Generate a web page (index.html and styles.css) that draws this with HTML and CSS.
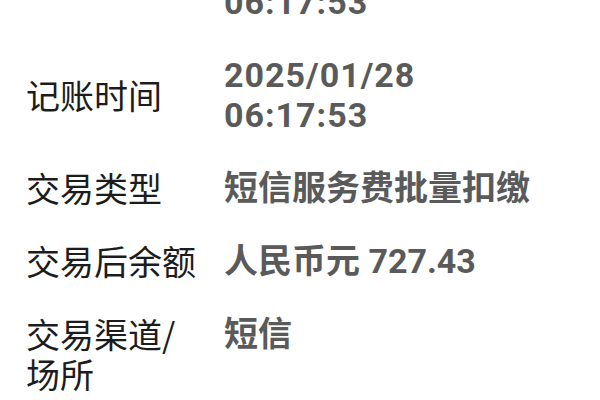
FILE: index.html
```html
<!DOCTYPE html>
<html lang="zh-CN">
<head>
<meta charset="utf-8">
<title>交易详情</title>
<link rel="stylesheet" href="styles.css">
</head>
<body>
<div class="detail-list">
  <div class="row">
    <div class="label">交易时间</div>
    <div class="value value-time">2025/01/28<br>06:17:53</div>
  </div>
  <div class="row">
    <div class="label">记账时间</div>
    <div class="value value-time">2025/01/28<br>06:17:53</div>
  </div>
  <div class="row">
    <div class="label">交易类型</div>
    <div class="value">短信服务费批量扣缴</div>
  </div>
  <div class="row">
    <div class="label">交易后余额</div>
    <div class="value">人民币元 727.43</div>
  </div>
  <div class="row">
    <div class="label">交易渠道/场所</div>
    <div class="value">短信</div>
  </div>
</div>
</body>
</html>
```

FILE: styles.css
```css
html, body {
  margin: 0;
  padding: 0;
  background: #ffffff;
  width: 600px;
  height: 400px;
  overflow: hidden;
}

.detail-list {
  display: flex;
  flex-direction: column;
  gap: 33px;
  margin-top: -58px;
  padding-left: 26px;
}

.row {
  display: flex;
  align-items: flex-start;
}

.label {
  flex: 0 0 176px;
  margin-right: 22px;
  align-self: center;
  font-family: "Noto Sans CJK SC", sans-serif;
  font-size: 34px;
  line-height: 40px;
  color: #1c1c1c;
}

.value {
  flex: 1;
  font-family: Roboto, "Noto Sans CJK SC", sans-serif;
  font-weight: 700;
  font-size: 34px;
  line-height: 40px;
  color: #5a5a5a;
}

.value-time {
  letter-spacing: 1px;
}
```
